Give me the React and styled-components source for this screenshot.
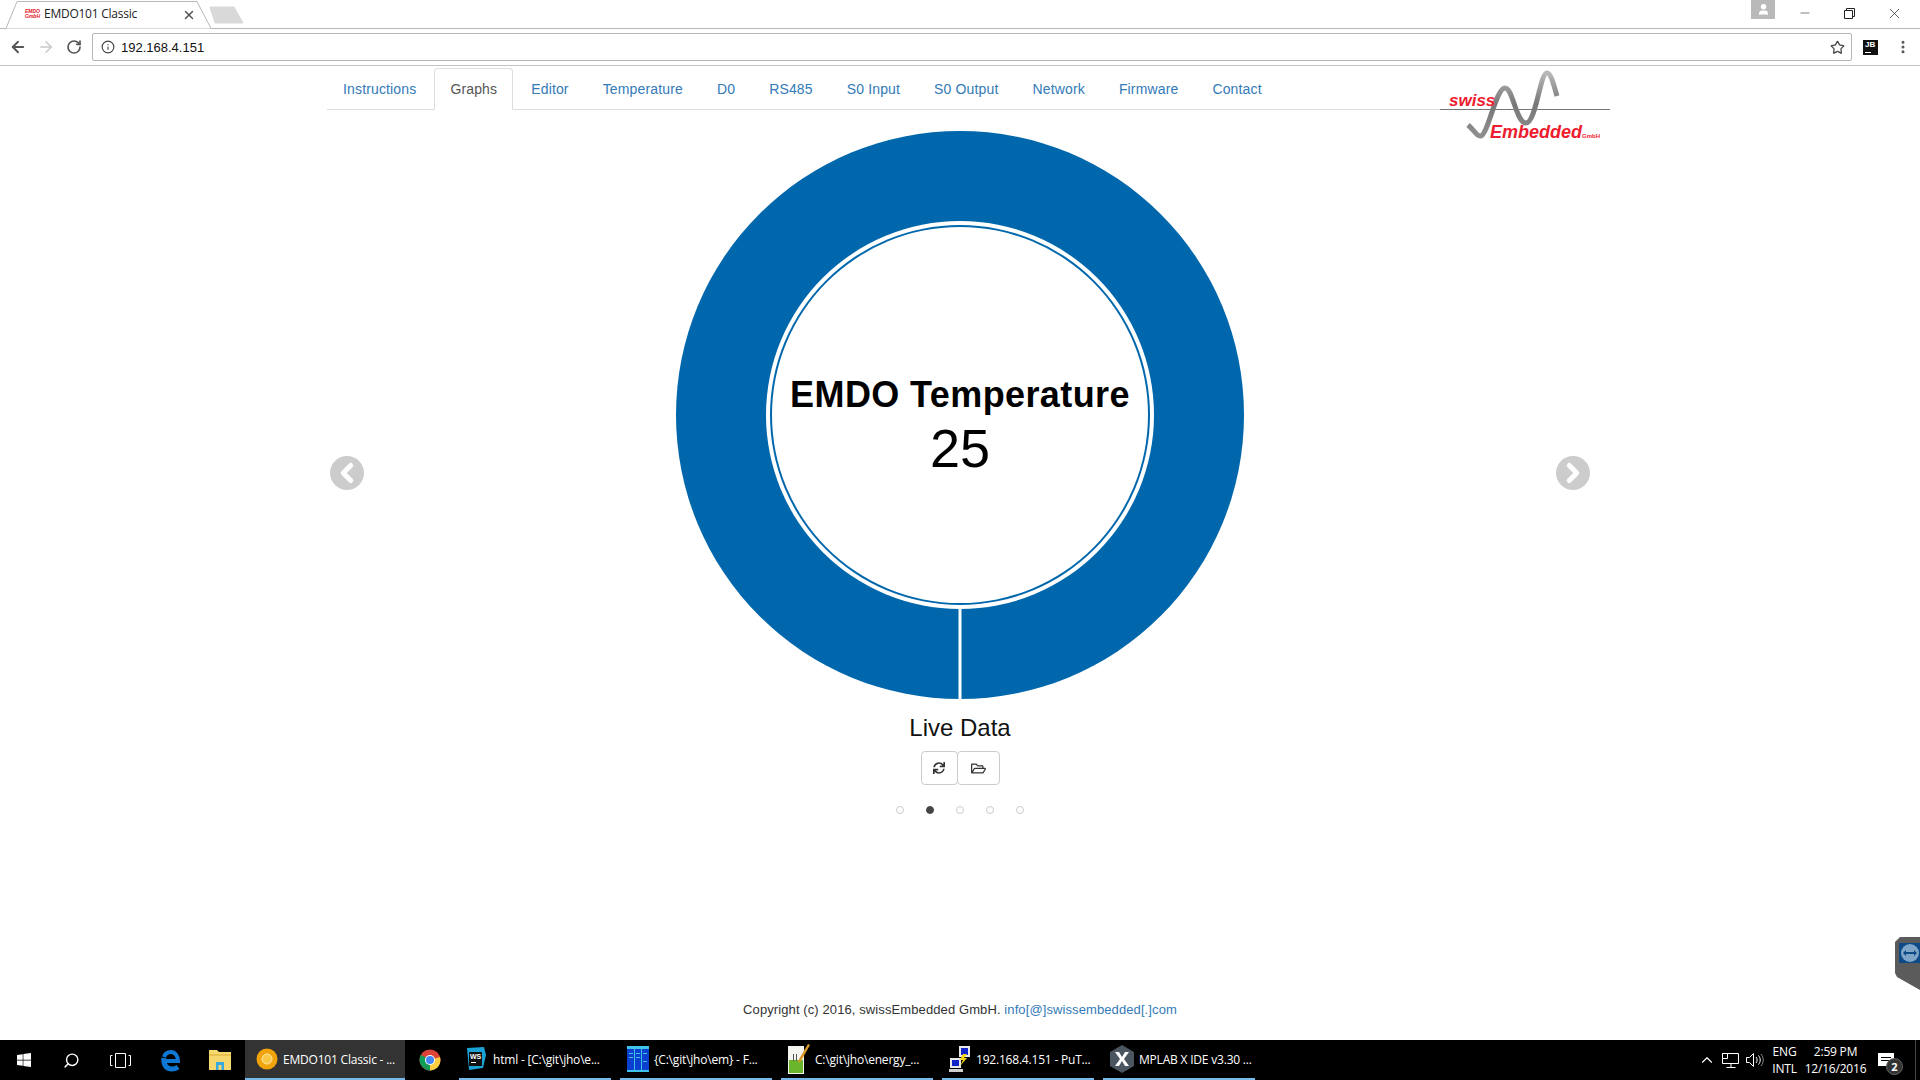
import React from 'react';
import styled, { createGlobalStyle } from 'styled-components';
import { ArrowLeft, ArrowRight, RotateCw, Info, Star, X, Minus, ChevronUp, ChevronLeft, ChevronRight, User, Search, MoreVertical } from 'lucide-react';
import { FaSync, FaRegFolderOpen, FaWindows } from 'react-icons/fa';

const GlobalStyle = createGlobalStyle`
  html, body { margin: 0; padding: 0; height: 100%; overflow: hidden; background: #fff; }
  body { font-family: "Liberation Sans", Arial, sans-serif; font-size: 14px; color: #333; }
  * { box-sizing: border-box; }
`;

const Screen = styled.div`
  width: 1920px;
  height: 1080px;
  display: flex;
  flex-direction: column;
  position: relative;
  overflow: hidden;
`;

/* browser chrome */
const TabStrip = styled.div`
  height: 29px;
  display: flex;
  align-items: stretch;
  border-bottom: 1px solid #b8b8b8;
  position: relative;
`;

const BrowserTab = styled.div`
  position: relative;
  width: 212px;
  height: 29px;
  padding: 6px 0 0 24px;
  display: flex;
  align-items: flex-start;
  flex: none;
`;

const TabShape = styled.svg`
  position: absolute;
  left: 0;
  top: 0;
`;

const Favicon = styled.span`
  position: relative;
  width: 17px;
  margin-top: 3px;
  color: #e3101f;
  font: italic bold 5px/5px "Liberation Sans", sans-serif;
  text-align: center;
`;

const TabTitle = styled.span`
  position: relative;
  margin-left: 3px;
  width: 138px;
  font: 12px/16px "Open Sans", sans-serif;
  letter-spacing: -0.25px;
  color: #222;
`;

const TabClose = styled.span`
  position: relative;
  margin-top: 2px;
  display: flex;
  color: #555;
`;

const NewTab = styled.svg`
  margin: 6px 0 0 -3px;
  flex: none;
`;

const WindowControls = styled.div`
  margin-left: auto;
  padding-right: 3px;
  display: flex;
  align-items: flex-start;
`;

const Profile = styled.div`
  width: 24px;
  height: 19px;
  margin-right: 7px;
  background: #b9b9b9;
  color: #fff;
  display: flex;
  align-items: center;
  justify-content: center;
`;

const WinButton = styled.div`
  width: 45px;
  height: 26px;
  display: flex;
  align-items: center;
  justify-content: center;
  color: #222;
`;

const Toolbar = styled.div`
  height: 37px;
  display: flex;
  align-items: center;
  border-bottom: 1px solid #c4c4c4;
`;

const NavButton = styled.div`
  width: 28px;
  display: flex;
  justify-content: center;
  color: ${(p) => (p.$off ? '#c9c9c9' : '#555')};
  &:first-child { margin-left: 4px; }
`;

const Address = styled.div`
  width: 1760px;
  height: 28px;
  margin-left: 4px;
  border: 1px solid #b5b5b5;
  border-radius: 2px;
  display: flex;
  align-items: center;
  padding: 0 6px 0 8px;
  font-size: 13px;
  color: #111;
`;

const AddressText = styled.span`
  margin-left: 6px;
  flex: 1;
`;

const JbBadge = styled.div`
  width: 15px;
  height: 15px;
  margin-left: 11px;
  background: #111;
  color: #fff;
  font: bold 8px/10px "Liberation Sans", sans-serif;
  padding-left: 2px;
  position: relative;
  &::after {
    content: '';
    position: absolute;
    left: 2px;
    bottom: 2px;
    width: 6px;
    height: 1px;
    background: #fff;
  }
`;

const MenuDots = styled.div`
  margin-left: 17px;
  display: flex;
  color: #555;
`;

/* page */
const Page = styled.main`
  flex: 1;
  display: flex;
  flex-direction: column;
  align-items: center;
  min-height: 0;
`;

const Container = styled.div`
  width: 1266px;
  position: relative;
  margin-top: 2px;
`;

const Tabs = styled.ul`
  list-style: none;
  margin: 0;
  padding: 0;
  display: flex;
  gap: 2px;
  height: 42px;
  border-bottom: 1px solid #ddd;
  letter-spacing: 0.15px;
`;

const TabLink = styled.a`
  display: block;
  height: 42px;
  padding: 10px 15px;
  line-height: 20px;
  border: 1px solid ${(p) => (p.$active ? '#ddd' : 'transparent')};
  border-bottom-color: ${(p) => (p.$active ? '#fff' : 'transparent')};
  border-radius: 4px 4px 0 0;
  color: ${(p) => (p.$active ? '#555' : '#337ab7')};
  background: ${(p) => (p.$active ? '#fff' : 'transparent')};
`;

const Logo = styled.svg`
  position: absolute;
  right: -27px;
  top: -8px;
`;

const Carousel = styled.section`
  height: 726px;
  display: flex;
  align-items: center;
  justify-content: space-between;
  padding: 0 3px;
`;

const Arrow = styled.div`
  width: 34px;
  height: 34px;
  border-radius: 50%;
  background: #cccccc;
  color: #fff;
  display: flex;
  align-items: center;
  justify-content: center;
`;

const Slide = styled.div`
  display: flex;
  flex-direction: column;
  align-items: center;
  padding: 21px 0 22px;
`;

const Donut = styled.svg`
  display: block;
`;

const Caption = styled.div`
  margin-top: 16px;
  font-size: 24px;
  line-height: 26px;
  color: #111;
`;

const ButtonGroup = styled.div`
  margin-top: 10px;
  display: flex;
`;

const GroupButton = styled.button`
  width: ${(p) => p.$width}px;
  height: 34px;
  margin-left: ${(p) => (p.$joined ? '-1px' : '0')};
  padding: 0;
  background: #fff;
  border: 1px solid #ccc;
  border-radius: 4px;
  color: #333;
  display: flex;
  align-items: center;
  justify-content: center;
`;

const Dots = styled.div`
  margin-top: 21px;
  display: flex;
  gap: 22px;
`;

const Dot = styled.span`
  width: 8px;
  height: 8px;
  border-radius: 50%;
  border: 1px solid ${(p) => (p.$on ? '#444' : '#ccc')};
  background: ${(p) => (p.$on ? '#444' : '#fff')};
`;

const Footer = styled.footer`
  margin-top: auto;
  padding-bottom: 20px;
  line-height: 20px;
  color: #333;
  font-size: 13px;
  letter-spacing: 0.1px;
  white-space: pre;
`;

const MailLink = styled.a`
  color: #337ab7;
`;

const TeamViewer = styled.div`
  position: absolute;
  right: 0;
  top: 937px;
`;

/* taskbar */
const Taskbar = styled.footer`
  height: 40px;
  background: #000;
  display: flex;
  align-items: stretch;
  color: #fff;
  flex: none;
`;

const Slot = styled.div`
  width: ${(p) => p.$width}px;
  margin-right: ${(p) => p.$gap || 0}px;
  flex: none;
  display: flex;
  align-items: center;
  justify-content: center;
  color: #fff;
`;

const TaskItem = styled.div`
  width: ${(p) => p.$width}px;
  flex: none;
  margin-right: ${(p) => p.$gap || 0}px;
  padding-left: ${(p) => (p.$active ? 11 : 7)}px;
  display: flex;
  align-items: center;
  gap: 5px;
  font: 12px "Open Sans", sans-serif;
  letter-spacing: -0.2px;
  white-space: nowrap;
  background: ${(p) => (p.$active ? '#333' : 'transparent')};
  border-bottom: 2px solid #76b9ed;
`;

const Tray = styled.div`
  margin-left: auto;
  display: flex;
  align-items: center;
  color: #fff;
`;

const TrayIcon = styled.div`
  width: ${(p) => p.$width}px;
  display: flex;
  justify-content: center;
`;

const TrayText = styled.div`
  width: ${(p) => p.$width}px;
  text-align: center;
  font: 12px/17px "Open Sans", sans-serif;
  letter-spacing: -0.2px;
  white-space: nowrap;
`;

const Notify = styled.div`
  width: 36px;
  height: 40px;
  position: relative;
  display: flex;
  align-items: center;
  justify-content: center;
  margin-right: 11px;
`;

const NotifyBadge = styled.span`
  position: absolute;
  left: 18px;
  top: 18px;
  width: 17px;
  height: 17px;
  border-radius: 50%;
  background: #333;
  border: 1px solid #666;
  font: bold 11px/15px "Open Sans", sans-serif;
  text-align: center;
`;

const TrayEdge = styled.div`
  width: 5px;
  height: 40px;
  border-left: 1px solid #444;
`;

const navItems = ['Instructions', 'Graphs', 'Editor', 'Temperature', 'D0', 'RS485', 'S0 Input', 'S0 Output', 'Network', 'Firmware', 'Contact'];

const ChromeIcon = () => (
  <svg width="22" height="22" viewBox="0 0 22 22">
    <circle cx="11" cy="11" r="10.5" fill="#db4437" />
    <path d="M11 11 L20.1 16.2 A10.5 10.5 0 0 1 6 20.2 Z" fill="#0f9d58" />
    <path d="M11 11 L6 20.2 A10.5 10.5 0 0 1 1.9 5.8 Z" fill="#0f9d58" />
    <path d="M11 11 L21 8 A10.5 10.5 0 0 1 11 21.5 Z" fill="#ffcd40" />
    <circle cx="11" cy="11" r="5" fill="#fff" />
    <circle cx="11" cy="11" r="4" fill="#4285f4" />
  </svg>
);

const EdgeIcon = () => (
  <svg width="20" height="24" viewBox="0 0 20 24" fill="none" stroke="#0f78d4" strokeWidth="5">
    <path d="M3 13h14c0-5-3-9-7-9-3 0-6 2-7 5" strokeWidth="4" />
    <path d="M3 10c-1 6 2 11 8 11 2 0 4-.5 6-2" />
  </svg>
);

const ExplorerIcon = () => (
  <svg width="22" height="22" viewBox="0 0 22 22">
    <path d="M0 1h8l2 2h12v18H0z" fill="#f5d76e" />
    <path d="M0 5h22v2H0z" fill="#e8c04f" />
    <path d="M7 13h8v8H7z" fill="#36a9e1" />
    <path d="M9.500 16h3v5h-3z" fill="#f5d76e" />
  </svg>
);

const ClassicIcon = () => (
  <svg width="22" height="22" viewBox="0 0 22 22">
    <circle cx="11" cy="11" r="10.5" fill="#f0a30a" />
    <circle cx="11" cy="11" r="5" fill="#f9c846" stroke="#ffe9a8" />
  </svg>
);

const WebStormIcon = () => (
  <svg width="22" height="24" viewBox="0 0 22 24">
    <path d="M1 1l17-1 2 8-3 13-14 2z" fill="#1ba3d6" />
    <path d="M3 5h13v14H3z" fill="#111" />
    <path d="M5 15h5v1H5z" fill="#fff" />
    <text x="4" y="12" fill="#fff" fontSize="7" fontWeight="bold" fontFamily="Liberation Sans">WS</text>
  </svg>
);

const CompareIcon = () => (
  <svg width="22" height="26" viewBox="0 0 22 26">
    <path d="M0 0h22v26H0z" fill="#0a3fd0" />
    <path d="M0 0h22v3H0zM0 24h22v2H0zM7 0h1v26H7zM14 0h1v26h-1zM2 7h4v1H2zM2 11h4v1H2zM9 7h4v1H9zM9 11h4v1H9zM16 7h4v1h-4zM16 15h4v1h-4z" fill="#3fc3e8" />
  </svg>
);

const NotepadIcon = () => (
  <svg width="22" height="30" viewBox="0 0 22 30">
    <path d="M0 2h16v28H0z" fill="#f4f4f0" />
    <path d="M1 16h14v13H1z" fill="#6bb52c" />
    <path d="M5 10h1v7H5zM8 10h1v7H8z" fill="#555" />
    <path d="M20 0l2 1-9 16-3 2 1-4z" fill="#d99a2b" />
  </svg>
);

const PuttyIcon = () => (
  <svg width="22" height="28" viewBox="0 0 22 28">
    <path d="M10 1h11v11H10z" fill="#e8e8e8" />
    <path d="M12 3h7v7h-7z" fill="#1024c8" />
    <path d="M1 13h11v10H1z" fill="#e8e8e8" />
    <path d="M3 15h7v6H3z" fill="#1024c8" />
    <path d="M0 24h14v3H0z" fill="#cfcfcf" />
    <path d="M14 9l-3 6h3l-3 6 7-8h-3l3-4z" fill="#f6d60a" />
  </svg>
);

const MplabIcon = () => (
  <svg width="24" height="28" viewBox="0 0 24 28">
    <path d="M12 0l12 7v14l-12 7L0 21V7z" fill="#4a5560" />
    <path d="M5 7h4l3 5 3-5h4l-5 7 5 7h-4l-3-5-3 5H5l5-7z" fill="#fff" />
  </svg>
);

const NetworkIcon = () => (
  <svg width="18" height="17" viewBox="0 0 18 17" fill="none" stroke="#fff">
    <path d="M.5 1.500h16v10H.5zM9 11.500v4M4.500 15.500h9" />
    <path d="M.5 1.500h5v5h-5z" fill="#000" />
  </svg>
);

const SpeakerIcon = () => (
  <svg width="18" height="16" viewBox="0 0 18 16" fill="none" stroke="#fff">
    <path d="M.5 5.500h3l4-4v13l-4-4h-3z" />
    <path d="M10 5c1.500 1.800 1.500 4.200 0 6M12.500 3.500c2.300 2.700 2.300 6.300 0 9" />
    <path d="M15 2c3 3.500 3 8.500 0 12" stroke="#888" />
  </svg>
);

const App = () => (
  <Screen>
    <GlobalStyle />
    <TabStrip>
      <BrowserTab>
        <TabShape width="214" height="29" viewBox="0 0 214 29">
          <path d="M0 28.500h6L17 1.500h180L211 28.500" fill="#fff" stroke="#b8b8b8" />
        </TabShape>
        <Favicon>EMDO<br />GmbH</Favicon>
        <TabTitle>EMDO101 Classic</TabTitle>
        <TabClose><X size={14} strokeWidth={2.5} /></TabClose>
      </BrowserTab>
      <NewTab width="36" height="19" viewBox="0 0 36 19">
        <path d="M1 1h24l9 16H6z" fill="#d9d9d9" stroke="#d9d9d9" strokeLinejoin="round" />
      </NewTab>
      <WindowControls>
        <Profile><User size={13} fill="#fff" /></Profile>
        <WinButton><Minus size={14} strokeWidth={1} /></WinButton>
        <WinButton>
          <svg width="11" height="11" viewBox="0 0 11 11" fill="none" stroke="#222">
            <path d="M.5 2.500h8v8h-8zM2.500 2.500v-2h8v8h-2" />
          </svg>
        </WinButton>
        <WinButton><X size={17} strokeWidth={1} /></WinButton>
      </WindowControls>
    </TabStrip>
    <Toolbar>
      <NavButton><ArrowLeft size={18} strokeWidth={2.5} /></NavButton>
      <NavButton $off><ArrowRight size={18} strokeWidth={2} /></NavButton>
      <NavButton><RotateCw size={16} strokeWidth={2.5} /></NavButton>
      <Address>
        <Info size={14} color="#444" />
        <AddressText>192.168.4.151</AddressText>
        <Star size={15} color="#444" strokeWidth={2} />
      </Address>
      <JbBadge>JB</JbBadge>
      <MenuDots><MoreVertical size={16} strokeWidth={2.5} /></MenuDots>
    </Toolbar>

    <Page>
      <Container>
        <Tabs>
          {navItems.map((item) => (
            <li key={item}>
              <TabLink $active={item === 'Graphs'}>{item}</TabLink>
            </li>
          ))}
        </Tabs>
        <Logo width="200" height="90" viewBox="0 0 200 90">
          <defs>
            <linearGradient id="wave" x1="0" y1="0" x2="0" y2="1">
              <stop offset="0" stopColor="#b8b8b8" />
              <stop offset="0.5" stopColor="#777" />
              <stop offset="1" stopColor="#8f8f8f" />
            </linearGradient>
          </defs>
          <path d="M20 49.500h170" stroke="#777" strokeWidth="1" />
          <path d="M48 65 C54 70 57 77 61 76 C68 74 76 28 85 28 C93 28 96 63 106 63 C116 63 120 13 127 13 C131 13 134 26 137 36" fill="none" stroke="url(#wave)" strokeWidth="5" />
          <text x="29" y="46" fill="#ed1c2e" fontSize="17" fontWeight="bold" fontStyle="italic" fontFamily="Liberation Sans">swiss</text>
          <text x="70" y="78" fill="#ed1c2e" fontSize="18" fontWeight="bold" fontStyle="italic" fontFamily="Liberation Sans">Embedded</text>
          <text x="162" y="78" fill="#ed1c2e" fontSize="6" fontWeight="bold" fontFamily="Liberation Sans">GmbH</text>
        </Logo>
        <Carousel>
          <Arrow><ChevronLeft size={30} strokeWidth={4} /></Arrow>
          <Slide>
            <Donut width="568" height="568" viewBox="0 0 568 568">
              <circle cx="284" cy="284" r="284" fill="#0067ac" />
              <circle cx="284" cy="284" r="194" fill="#fff" />
              <circle cx="284" cy="284" r="190" fill="#0067ac" />
              <circle cx="284" cy="284" r="188" fill="#fff" />
              <path d="M284 478V568" stroke="#fff" strokeWidth="3" />
              <text x="284" y="276" textAnchor="middle" fontSize="36" fontWeight="bold" letterSpacing="0.4" fill="#000" fontFamily="Liberation Sans">EMDO Temperature</text>
              <text x="284" y="336" textAnchor="middle" fontSize="54" fill="#000" fontFamily="Liberation Sans">25</text>
            </Donut>
            <Caption>Live Data</Caption>
            <ButtonGroup>
              <GroupButton $width={37}><FaSync size={12} /></GroupButton>
              <GroupButton $width={43} $joined><FaRegFolderOpen size={15} /></GroupButton>
            </ButtonGroup>
            <Dots>
              {[0, 1, 2, 3, 4].map((i) => <Dot key={i} $on={i === 1} />)}
            </Dots>
          </Slide>
          <Arrow><ChevronRight size={30} strokeWidth={4} /></Arrow>
        </Carousel>
      </Container>
      <Footer>Copyright (c) 2016, swissEmbedded GmbH. <MailLink>info[@]swissembedded[.]com</MailLink></Footer>
    </Page>

    <TeamViewer>
      <svg width="25" height="53" viewBox="0 0 25 53">
        <path d="M5 0H25V53L2 40 0 36V5z" fill="#5b5b5b" />
        <rect x="4" y="6" width="21" height="20" fill="#0e4a85" />
        <circle cx="15" cy="16" r="9" fill="#7ea4c8" />
        <path d="M8 16l3-3v2h8v-2l3 3-3 3v-2h-8v2z" fill="#0e4a85" />
      </svg>
    </TeamViewer>

    <Taskbar>
      <Slot $width={48}><FaWindows size={16} /></Slot>
      <Slot $width={46}><Search size={17} style={{ transform: 'scaleX(-1)' }} /></Slot>
      <Slot $width={53}>
        <svg width="21" height="15" viewBox="0 0 21 15" fill="none" stroke="#fff">
          <path d="M5.500.5h10v14h-10zM2.500 2.500h-2v10h2M18.500 2.500h2v10h-2" />
        </svg>
      </Slot>
      <Slot $width={48}><EdgeIcon /></Slot>
      <Slot $width={50}><ExplorerIcon /></Slot>
      <TaskItem $active $width={160}><ClassicIcon />EMDO101 Classic - ...</TaskItem>
      <Slot $width={49} $gap={5}><ChromeIcon /></Slot>
      <TaskItem $width={152} $gap={9}><WebStormIcon />html - [C:\git\jho\e...</TaskItem>
      <TaskItem $width={152} $gap={9}><CompareIcon />{'{C:\\git\\jho\\em} - F...'}</TaskItem>
      <TaskItem $width={152} $gap={9}><NotepadIcon />C:\git\jho\energy_...</TaskItem>
      <TaskItem $width={152} $gap={9}><PuttyIcon />192.168.4.151 - PuT...</TaskItem>
      <TaskItem $width={152}><MplabIcon />MPLAB X IDE v3.30 ...</TaskItem>
      <Tray>
        <TrayIcon $width={24}><ChevronUp size={18} strokeWidth={1.5} /></TrayIcon>
        <TrayIcon $width={24}><NetworkIcon /></TrayIcon>
        <TrayIcon $width={23}><SpeakerIcon /></TrayIcon>
        <TrayText $width={37}>ENG<br />INTL</TrayText>
        <TrayText $width={65}>2:59 PM<br />12/16/2016</TrayText>
        <Notify>
          <svg width="16" height="14" viewBox="0 0 16 14">
            <path d="M0 0h16v13H0z" fill="#fff" />
            <path d="M3 4h10v1H3zM3 7h10v1H3z" fill="#000" />
          </svg>
          <NotifyBadge>2</NotifyBadge>
        </Notify>
        <TrayEdge />
      </Tray>
    </Taskbar>
  </Screen>
);

export default App;
